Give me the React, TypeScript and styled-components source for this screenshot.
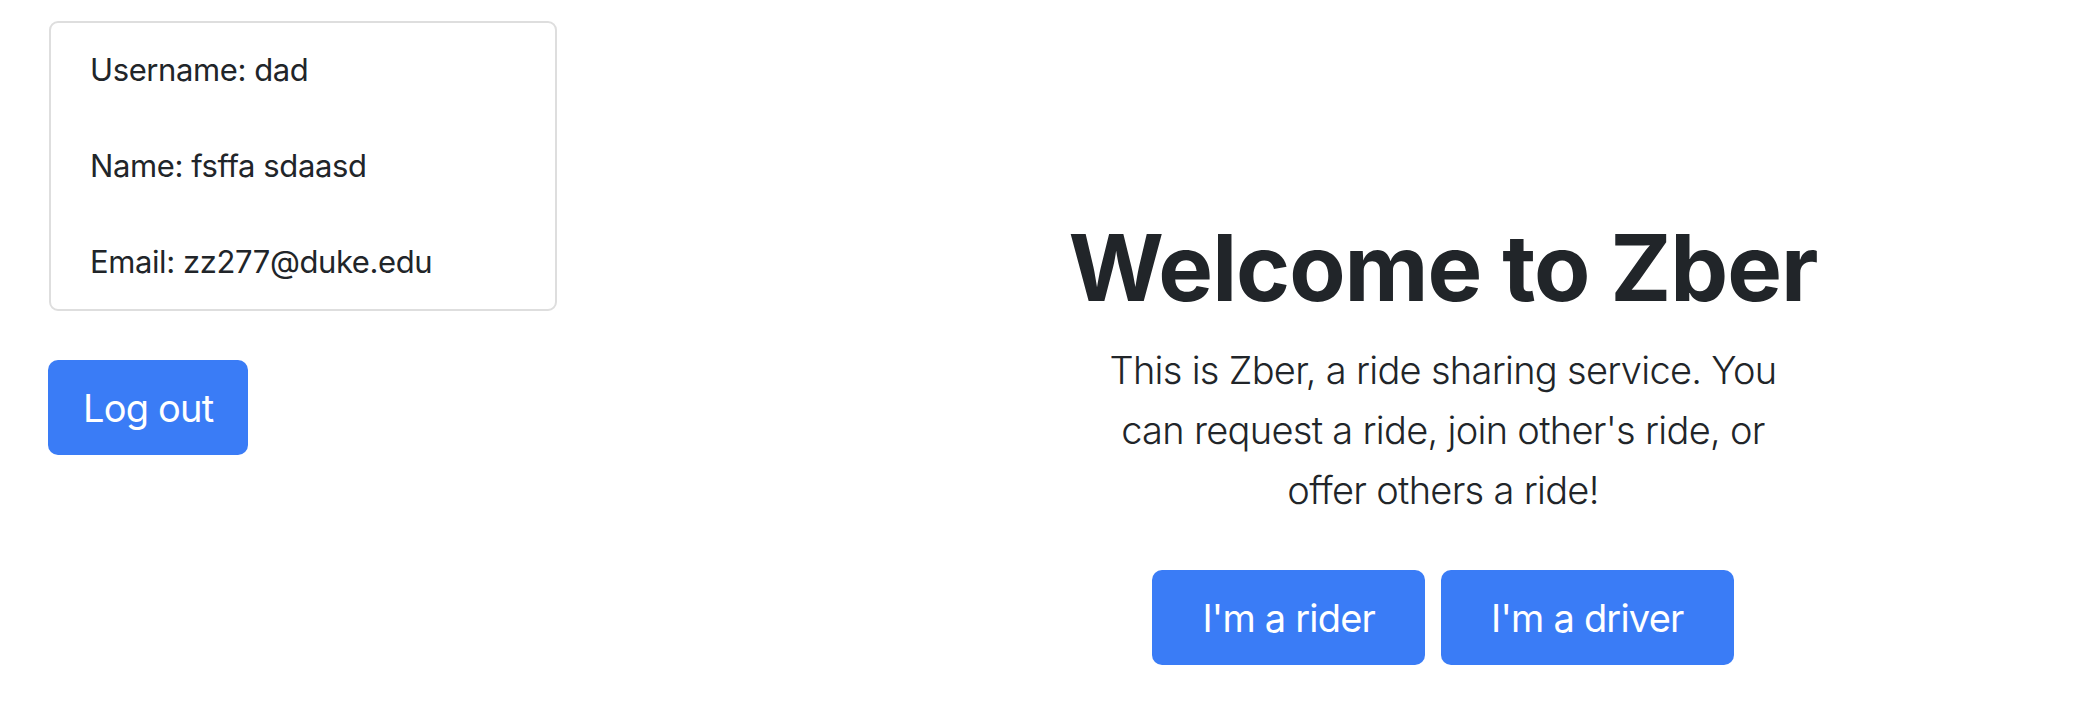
import React from "react";
import styled, { createGlobalStyle } from "styled-components";

const GlobalStyle = createGlobalStyle`
  html, body {
    margin: 0;
    padding: 0;
    background: #ffffff;
  }
  body {
    font-family: Inter, "Noto Sans", "Liberation Sans", sans-serif;
    color: #212529;
  }
  * { box-sizing: border-box; }
`;

const Page = styled.div`
  display: flex;
  width: 2082px;
  min-height: 722px;
`;

const Sidebar = styled.aside`
  width: 804px;
  flex: 0 0 804px;
  padding: 21px 0 0 49px;
  display: flex;
  flex-direction: column;
  align-items: flex-start;
`;

const Card = styled.div`
  width: 508px;
  border: 2px solid #dedede;
  border-radius: 9px;
  padding: 23px 40px 23px 39px;
  display: flex;
  flex-direction: column;
  gap: 48px;
`;

const InfoLine = styled.p`
  margin: 0;
  font-size: 31px;
  line-height: 48px;
  font-weight: 400;
  letter-spacing: -0.4px;
  color: #212529;
`;

const Button = styled.button<{ $px?: number }>`
  display: inline-flex;
  align-items: center;
  justify-content: center;
  height: 95px;
  padding: 0 ${(p) => p.$px ?? 35}px;
  border: none;
  border-radius: 10px;
  background: #3a7cf6;
  color: #ffffff;
  font-family: Inter, "Noto Sans", "Liberation Sans", sans-serif;
  font-size: 38px;
  font-weight: 400;
  letter-spacing: -0.8px;
  line-height: 60px;
  cursor: pointer;
`;

const LogoutButton = styled(Button)`
  margin-top: 49px;
  margin-left: -1px;
`;

const Main = styled.main`
  flex: 1;
  display: flex;
  flex-direction: column;
  align-items: center;
  padding-top: 213px;
  text-align: center;
`;

const Title = styled.h1`
  margin: 0;
  font-size: 92px;
  line-height: 1.2;
  font-weight: 700;
  letter-spacing: -1px;
  color: #212529;
  white-space: nowrap;
`;

const Lead = styled.p`
  margin: 17px 0 0;
  max-width: 700px;
  font-size: 38px;
  line-height: 60px;
  font-weight: 300;
  letter-spacing: -0.7px;
  color: #212529;
`;

const ButtonRow = styled.div`
  display: flex;
  gap: 16px;
  margin-top: 50px;
`;

export default function App() {
  return (
    <>
      <GlobalStyle />
      <Page>
        <Sidebar>
          <Card>
            <InfoLine>Username: dad</InfoLine>
            <InfoLine>Name: fsffa sdaasd</InfoLine>
            <InfoLine>Email: zz277@duke.edu</InfoLine>
          </Card>
          <LogoutButton>Log out</LogoutButton>
        </Sidebar>
        <Main>
          <Title>Welcome to Zber</Title>
          <Lead>
            This is Zber, a ride sharing service. You can request a ride, join
            other's ride, or offer others a ride!
          </Lead>
          <ButtonRow>
            <Button $px={50}>I'm a rider</Button>
            <Button $px={50}>I'm a driver</Button>
          </ButtonRow>
        </Main>
      </Page>
    </>
  );
}
